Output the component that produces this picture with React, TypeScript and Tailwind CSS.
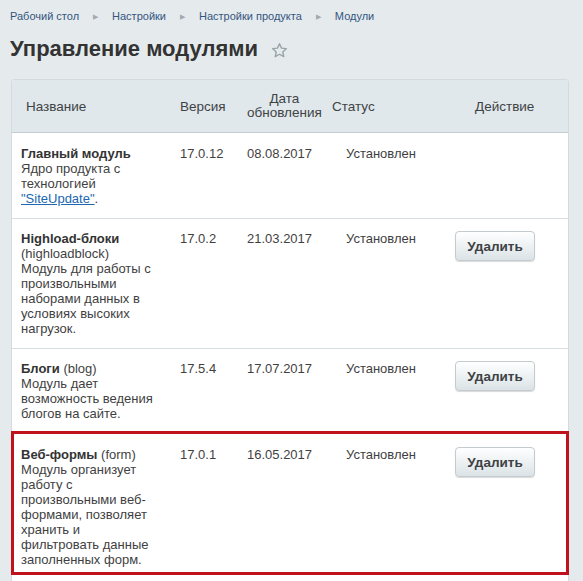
import React from 'react';

type ModuleRow = {
  title: string;
  code?: string;
  desc: React.ReactNode;
  version: string;
  date: string;
  removable: boolean;
  highlighted?: boolean;
  pad: string;
};

const crumbs = ['Рабочий стол', 'Настройки', 'Настройки продукта', 'Модули'];

const rows: ModuleRow[] = [
  {
    title: 'Главный модуль',
    desc: (
      <>
        Ядро продукта с технологией{' '}
        <a href="#" className="text-[#2067b0] underline">
          "SiteUpdate"
        </a>
        .
      </>
    ),
    version: '17.0.12',
    date: '08.08.2017',
    removable: false,
    pad: 'pt-[13px] pb-[12px]',
  },
  {
    title: 'Highload-блоки',
    code: 'highloadblock',
    desc: 'Модуль для работы с произвольными наборами данных в условиях высоких нагрузок.',
    version: '17.0.2',
    date: '21.03.2017',
    removable: true,
    pad: 'pt-[12px] pb-[12px]',
  },
  {
    title: 'Блоги',
    code: 'blog',
    desc: 'Модуль дает возможность ведения блогов на сайте.',
    version: '17.5.4',
    date: '17.07.2017',
    removable: true,
    pad: 'pt-[12px] pb-[10px]',
  },
  {
    title: 'Веб-формы',
    code: 'form',
    desc: 'Модуль организует работу с произвольными веб-формами, позволяет хранить и фильтровать данные заполненных форм.',
    version: '17.0.1',
    date: '16.05.2017',
    removable: true,
    highlighted: true,
    pad: 'pt-[15px] pb-[7px]',
  },
];

const cols = 'grid grid-cols-[158px_67px_85px_114px_1fr]';

// контурная звезда у заголовка
const StarIcon = () => (
  <svg width="17" height="17" viewBox="0 0 24 24" className="ml-[13px] mt-[3px]">
    <path
      d="M12 2.5l2.9 6.2 6.7.7-5 4.6 1.4 6.7L12 17.3l-6 3.4 1.4-6.7-5-4.6 6.7-.7z"
      fill="none"
      stroke="#9aa3a8"
      strokeWidth="2"
      strokeLinejoin="round"
    />
  </svg>
);

const DeleteButton = () => (
  <button
    type="button"
    className="ml-[19px] w-[80px] h-[30px] rounded-[4px] border border-[#c3cbce] bg-gradient-to-b from-[#ffffff] to-[#dbe3e6] shadow-[0_1px_1px_rgba(0,0,0,0.15)] text-[13.5px] font-bold text-[#3d4245]"
  >
    Удалить
  </button>
);

export default function App() {
  return (
    <div
      className="h-[581px] overflow-hidden bg-[#e5ebed] text-[13px] leading-[15px] text-[#3f3f3f]"
      style={{ fontFamily: '"Liberation Sans", Arial, sans-serif' }}
    >
      {/* хлебные крошки */}
      <div className="flex items-center pl-[10px] pt-[9px] h-[24px] text-[11px] text-[#34557f]">
        {crumbs.map((c, i) => (
          <React.Fragment key={c}>
            {i > 0 && <span className="mx-[14px] text-[7px] text-[#a3a9ad]">▶</span>}
            <span>{c}</span>
          </React.Fragment>
        ))}
      </div>

      <div className="flex items-center pl-[10px] mt-[12px] h-[26px]">
        <h1 className="text-[22px] leading-[26px] font-bold text-[#333333]">Управление модулями</h1>
        <StarIcon />
      </div>

      {/* таблица модулей */}
      <div className="mt-[17px] ml-[11px] w-[558px] border border-[#d3dbde] rounded-[3px] bg-white">
        <div className={`${cols} h-[53px] items-center bg-[#e0e8eb] border-b border-[#c3ccd0] text-[13.5px] text-[#3f4346]`}>
          <div className="pl-[14px]">Название</div>
          <div className="pl-[10px]">Версия</div>
          <div className="pl-[10px]">
            <span className="inline-block text-center leading-[14px]">
              Дата
              <br />
              обновления
            </span>
          </div>
          <div className="pl-[10px]">Статус</div>
          <div className="pl-[39px]">Действие</div>
        </div>

        {rows.map((r, i) => (
          <div
            key={i}
            className={`${cols} ${r.pad} ${
              r.highlighted
                ? 'outline-[3px] outline-solid outline-[#c0121c] outline-offset-[-2px] relative z-10'
                : 'border-b border-[#d7dee1]'
            }`}
          >
            <div className="pl-[9px] pr-[14px]">
              <span className="font-bold text-[#333333]">{r.title}</span>
              {r.code && <span> ({r.code})</span>}
              <br />
              {r.desc}
            </div>
            <div className="pl-[10px]">{r.version}</div>
            <div className="pl-[10px]">{r.date}</div>
            <div className="pl-[24px]">Установлен</div>
            <div>{r.removable && <DeleteButton />}</div>
          </div>
        ))}
        <div className="h-[40px] border-t border-[#d7dee1]" />
      </div>
    </div>
  );
}
